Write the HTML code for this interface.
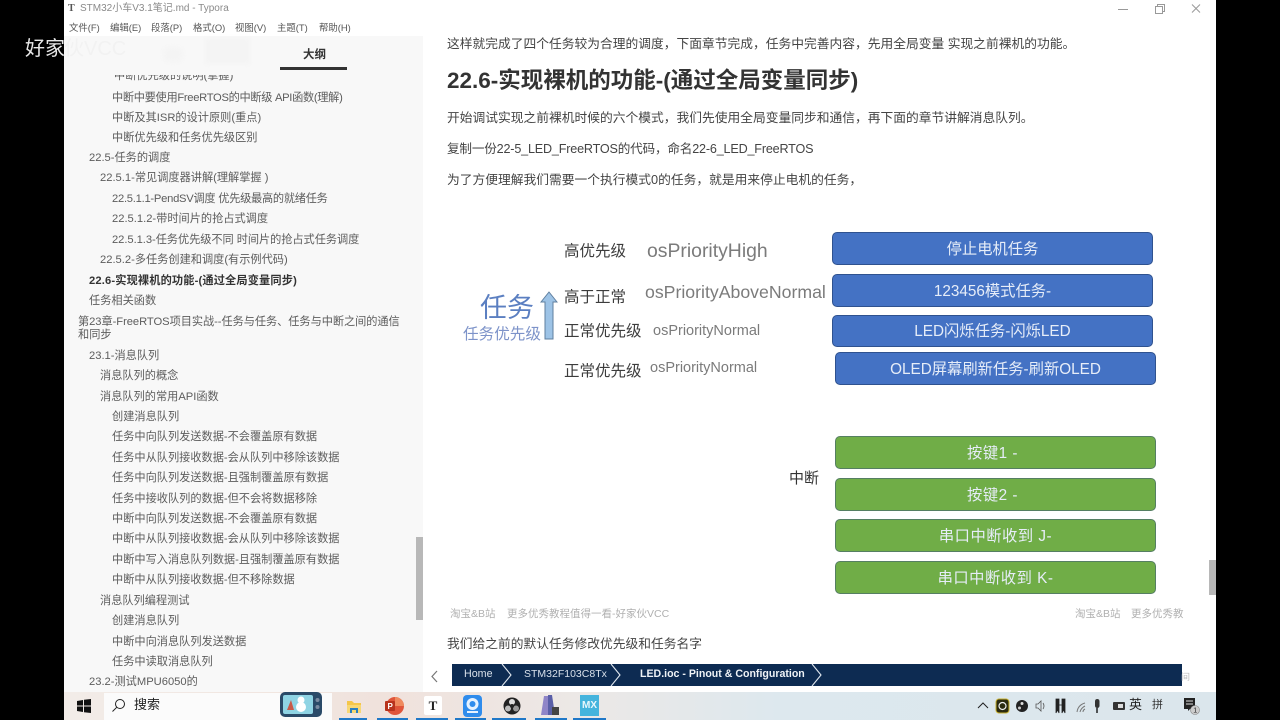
<!DOCTYPE html>
<html lang="zh">
<head>
<meta charset="utf-8">
<title>STM32小车V3.1笔记.md - Typora</title>
<style>
html,body{margin:0;padding:0;background:#000;}
body{width:1280px;height:720px;position:relative;overflow:hidden;font-family:"Liberation Sans","Noto Sans CJK SC",sans-serif;color:#444;}
div,span,svg{position:absolute;}
.t{white-space:nowrap;line-height:20px;height:20px;}
.m{font-size:9.4px;top:18px;color:#555;}
.o{font-size:11.2px;color:#5c5c5c;}
.b{font-size:12.75px;color:#444;}
.c{font-size:10.5px;color:#b0b0b0;}
.box{box-sizing:border-box;border-radius:5px;color:#e6edf8;font-size:15.3px;text-align:center;white-space:nowrap;}
.blue{background:#4472c4;border:1.5px solid #2f528f;}
.green{background:#70ad47;border:1.5px solid #557f62;letter-spacing:.5px;}
.lab{font-size:15.5px;color:#3c3c3c;white-space:nowrap;line-height:20px;}
.os{color:#7b7b7b;white-space:nowrap;line-height:20px;}
.bc{font-size:10.7px;line-height:14px;top:667px;color:#d8e0ea;white-space:nowrap;}
.ul{top:718px;height:2px;background:#1f78c8;}
</style>
</head>
<body>
<!-- window -->
<div style="left:64px;top:0;width:1152px;height:692px;background:#fff;"></div>
<div style="left:64px;top:36px;width:359px;height:656px;background:#f8f8f8;"></div>

<!-- title bar -->
<div class="t" style="left:68px;top:-1px;font:bold 10px/20px 'Liberation Serif',serif;color:#555;">T</div>
<div class="t" style="left:80px;top:-1px;font-size:10px;color:#8a8a8a;">STM32小车V3.1笔记.md - Typora</div>
<div class="t m" style="left:69px;">文件(F)</div>
<div class="t m" style="left:110px;">编辑(E)</div>
<div class="t m" style="left:151px;">段落(P)</div>
<div class="t m" style="left:193px;">格式(O)</div>
<div class="t m" style="left:235px;">视图(V)</div>
<div class="t m" style="left:277px;">主题(T)</div>
<div class="t m" style="left:319px;">帮助(H)</div>
<svg style="left:1115px;top:2px;" width="90" height="14" viewBox="0 0 90 14" fill="none" stroke="#999" stroke-width="1">
<path d="M3 7.500H13"/><path d="M40.500 4.500h7v7h-7zM42.500 4.500v-2h7v7h-2"/><path d="M77 2.500l8 8M85 2.500l-8 8"/>
</svg>

<!-- outline -->
<div style="left:64px;top:71px;width:352px;height:621px;overflow:hidden;">
<div class="t o" style="left:50px;top:-5px;">中断优先级的说明(掌握)</div>
<div class="t o" style="left:48px;top:17px;letter-spacing:-.3px;">中断中要使用FreeRTOS的中断级 API函数(理解)</div>
<div class="t o" style="left:48px;top:37px;">中断及其ISR的设计原则(重点)</div>
<div class="t o" style="left:48px;top:57px;">中断优先级和任务优先级区别</div>
<div class="t o" style="left:25px;top:77px;">22.5-任务的调度</div>
<div class="t o" style="left:36px;top:97px;">22.5.1-常见调度器讲解(理解掌握 )</div>
<div class="t o" style="left:48px;top:118px;letter-spacing:-.25px;">22.5.1.1-PendSV调度 优先级最高的就绪任务</div>
<div class="t o" style="left:48px;top:138px;">22.5.1.2-带时间片的抢占式调度</div>
<div class="t o" style="left:48px;top:159px;letter-spacing:-.05px;">22.5.1.3-任务优先级不同 时间片的抢占式任务调度</div>
<div class="t o" style="left:36px;top:179px;">22.5.2-多任务创建和调度(有示例代码)</div>
<div class="t o" style="left:25px;top:200px;font-weight:bold;color:#333;letter-spacing:.15px;">22.6-实现裸机的功能-(通过全局变量同步)</div>
<div class="t o" style="left:25px;top:220px;">任务相关函数</div>
<div class="t o" style="left:14px;top:241px;letter-spacing:-.05px;">第23章-FreeRTOS项目实战--任务与任务、任务与中断之间的通信</div>
<div class="t o" style="left:14px;top:254px;">和同步</div>
<div class="t o" style="left:25px;top:275px;">23.1-消息队列</div>
<div class="t o" style="left:36px;top:295px;">消息队列的概念</div>
<div class="t o" style="left:36px;top:316px;">消息队列的常用API函数</div>
<div class="t o" style="left:48px;top:336px;">创建消息队列</div>
<div class="t o" style="left:48px;top:356px;">任务中向队列发送数据-不会覆盖原有数据</div>
<div class="t o" style="left:48px;top:377px;">任务中从队列接收数据-会从队列中移除该数据</div>
<div class="t o" style="left:48px;top:397px;">任务中向队列发送数据-且强制覆盖原有数据</div>
<div class="t o" style="left:48px;top:418px;">任务中接收队列的数据-但不会将数据移除</div>
<div class="t o" style="left:48px;top:438px;">中断中向队列发送数据-不会覆盖原有数据</div>
<div class="t o" style="left:48px;top:458px;">中断中从队列接收数据-会从队列中移除该数据</div>
<div class="t o" style="left:48px;top:479px;">中断中写入消息队列数据-且强制覆盖原有数据</div>
<div class="t o" style="left:48px;top:499px;">中断中从队列接收数据-但不移除数据</div>
<div class="t o" style="left:36px;top:520px;">消息队列编程测试</div>
<div class="t o" style="left:48px;top:540px;">创建消息队列</div>
<div class="t o" style="left:48px;top:561px;">中断中向消息队列发送数据</div>
<div class="t o" style="left:48px;top:581px;">任务中读取消息队列</div>
<div class="t o" style="left:25px;top:601px;">23.2-测试MPU6050的</div>
</div>
<div style="left:64px;top:36px;width:352px;height:39px;background:#f8f8f8;"></div>
<div style="left:416px;top:537px;width:7px;height:83px;background:#b8b8b8;"></div>

<!-- watermark -->
<div class="t" style="left:25px;top:39px;font-size:20px;color:#e8e8e8;">好家</div>
<div class="t" style="left:64px;top:39px;font-size:20px;color:#f2f2f2;">伙VCC</div>
<div style="left:163px;top:47px;width:20px;height:15px;background:#f4f4f4;border-radius:7px;filter:blur(2px);"></div>
<div style="left:205px;top:38px;width:45px;height:26px;background:#f4f4f4;filter:blur(2px);"></div>

<!-- outline header -->
<div class="t" style="left:303px;top:45px;font-size:11.5px;font-weight:bold;color:#333;">大纲</div>
<div style="left:280px;top:67px;width:67px;height:3px;background:#333;"></div>

<!-- document -->
<div class="t b" style="left:447px;top:34px;">这样就完成了四个任务较为合理的调度，下面章节完成，任务中完善内容，先用全局变量 实现之前裸机的功能。</div>
<div class="t" style="left:447px;top:68px;height:26px;line-height:26px;font-size:22.500px;font-weight:bold;color:#333;">22.6-实现裸机的功能-(通过全局变量同步)</div>
<div class="t b" style="left:447px;top:108px;">开始调试实现之前裸机时候的六个模式，我们先使用全局变量同步和通信，再下面的章节讲解消息队列。</div>
<div class="t b" style="left:447px;top:139px;font-size:12.6px;letter-spacing:-.18px;">复制一份22-5_LED_FreeRTOS的代码，命名22-6_LED_FreeRTOS</div>
<div class="t b" style="left:447px;top:170px;">为了方便理解我们需要一个执行模式0的任务，就是用来停止电机的任务，</div>

<!-- diagram left -->
<div class="lab" style="left:564px;top:242px;">高优先级</div>
<div class="lab" style="left:564px;top:288px;">高于正常</div>
<div class="lab" style="left:564px;top:322px;">正常优先级</div>
<div class="lab" style="left:564px;top:362px;">正常优先级</div>
<div class="os" style="left:647px;top:241px;font-size:19.400px;">osPriorityHigh</div>
<div class="os" style="left:645px;top:282px;font-size:17.700px;">osPriorityAboveNormal</div>
<div class="os" style="left:653px;top:321px;font-size:14.500px;">osPriorityNormal</div>
<div class="os" style="left:650px;top:358px;font-size:14.500px;">osPriorityNormal</div>
<div class="t" style="left:480px;top:293px;height:30px;line-height:30px;font-size:27px;color:#5b7fc1;">任务</div>
<div class="t" style="left:463px;top:325px;font-size:15.600px;color:#7d93c9;">任务优先级</div>
<svg style="left:540px;top:291px;" width="18" height="49" viewBox="0 0 18 49">
<path d="M9 1L17 11H13V48H5V11H1Z" fill="#9dc3e6" stroke="#5f7f9f" stroke-width="1"/>
</svg>
<div class="t" style="left:789px;top:469px;font-size:15px;color:#333;">中断</div>

<!-- blue boxes -->
<div class="box blue" style="left:832px;top:232px;width:321px;height:33px;line-height:33px;">停止电机任务</div>
<div class="box blue" style="left:832px;top:274px;width:321px;height:33px;line-height:33px;">123456模式任务-</div>
<div class="box blue" style="left:832px;top:315px;width:321px;height:32px;line-height:32px;">LED闪烁任务-闪烁LED</div>
<div class="box blue" style="left:835px;top:352px;width:321px;height:33px;line-height:33px;">OLED屏幕刷新任务-刷新OLED</div>

<!-- green boxes -->
<div class="box green" style="left:835px;top:436px;width:321px;height:33px;line-height:33px;padding-right:6px;">按键1 -</div>
<div class="box green" style="left:835px;top:478px;width:321px;height:33px;line-height:33px;padding-right:6px;">按键2 -</div>
<div class="box green" style="left:835px;top:519px;width:321px;height:33px;line-height:33px;">串口中断收到 J-</div>
<div class="box green" style="left:835px;top:561px;width:321px;height:33px;line-height:33px;">串口中断收到 K-</div>

<!-- captions -->
<div class="t c" style="left:450px;top:604px;">淘宝&amp;B站</div>
<div class="t c" style="left:507px;top:604px;">更多优秀教程值得一看-好家伙VCC</div>
<div class="t c" style="left:1075px;top:604px;">淘宝&amp;B站</div>
<div class="t c" style="left:1131px;top:604px;">更多优秀教</div>
<div class="t b" style="left:447px;top:634px;">我们给之前的默认任务修改优先级和任务名字</div>

<!-- breadcrumb image -->
<svg style="left:430px;top:670px;" width="10" height="13" viewBox="0 0 10 13" fill="none" stroke="#777" stroke-width="1.200"><path d="M7 1L2 6.500L7 12"/></svg>
<div style="left:452px;top:664px;width:730px;height:22px;background:#0d2b52;"></div>
<div class="bc" style="left:464px;">Home</div>
<div class="bc" style="left:524px;font-size:10.5px;">STM32F103C8Tx</div>
<div class="bc" style="left:640px;font-weight:bold;color:#eef2f6;font-size:10.6px;">LED.ioc - Pinout &amp; Configuration</div>
<svg style="left:452px;top:664px;" width="380" height="22" viewBox="0 0 380 22" fill="none" stroke="#dfe6ee" stroke-width="1.100">
<path d="M50 0L59 11L50 22"/><path d="M159 0L168 11L159 22"/><path d="M360 0L369 11L360 22"/>
</svg>
<div class="t" style="left:1181px;top:667px;font-size:9px;color:#bbb;">间</div>
<div style="left:1209px;top:560px;width:7px;height:35px;background:#b8b8b8;"></div>

<!-- taskbar -->
<div style="left:64px;top:692px;width:1152px;height:28px;background:linear-gradient(90deg,#f2ece8 0%,#f0e2dc 28%,#ece8e6 45%,#dde8ee 62%,#dbe6ec 100%);"></div>
<svg style="left:77px;top:699px;" width="14" height="14" viewBox="0 0 14 14" fill="#111"><path d="M0 2L6 1V6.500H0ZM7 .8L14 0V6.500H7ZM0 7.500H6V13L0 12ZM7 7.500H14V14L7 13.200Z"/></svg>
<div style="left:104px;top:693px;width:228px;height:27px;background:#fbfbfb;"></div>
<svg style="left:111px;top:698px;" width="15" height="15" viewBox="0 0 15 15" fill="none" stroke="#222" stroke-width="1"><circle cx="9" cy="6" r="4.500"/><path d="M5.700 9.300L1.500 13.500"/></svg>
<div class="t" style="left:134px;top:695px;font-size:13px;color:#222;">搜索</div>
<!-- tv -->
<svg style="left:279px;top:690px;" width="44" height="30" viewBox="0 0 44 30">
<rect x="1" y="2" width="42" height="25" rx="5" fill="#2a4a68"/>
<rect x="4" y="5" width="30" height="19" rx="2" fill="#8fd4e4"/>
<circle cx="22" cy="17" r="5" fill="#fff"/><circle cx="22" cy="10" r="3.500" fill="#fff"/>
<path d="M8 20L12 10L15 20Z" fill="#c85a4a"/>
<circle cx="38.500" cy="10" r="2" fill="#7a8aa0"/><circle cx="38.500" cy="17" r="2" fill="#7a8aa0"/>
</svg>
<!-- folder -->
<svg style="left:346px;top:699px;" width="16" height="15" viewBox="0 0 16 15"><path d="M1 2h5l2 2h7v10H1z" fill="#f4c64a"/><path d="M1 6h14v8H1z" fill="#f7d774"/><path d="M4 14v-5h8v5h-2v-3H6v3z" fill="#2a7fc0"/></svg>
<!-- powerpoint -->
<svg style="left:384px;top:696px;" width="20" height="20" viewBox="0 0 20 20"><circle cx="11" cy="10" r="9" fill="#e0553a"/><path d="M11 1a9 9 0 0 1 9 9h-9z" fill="#ef8a5e"/><rect x="1" y="5" width="10" height="10" rx="1" fill="#b7331c"/><text x="3.500" y="13" font-size="8" font-weight="bold" fill="#fff" font-family="Liberation Sans">P</text></svg>
<!-- typora -->
<div style="left:424px;top:696px;width:18px;height:19px;background:#fff;border-radius:2px;text-align:center;font:bold 13px/19px 'Liberation Serif',serif;color:#222;">T</div>
<!-- webcam -->
<svg style="left:463px;top:695px;" width="19" height="22" viewBox="0 0 19 22"><rect x="0" y="0" width="19" height="22" rx="4" fill="#2f8cec"/><circle cx="9.500" cy="9" r="6" fill="#e6f2ff"/><circle cx="9.500" cy="9" r="3" fill="#2f8cec"/><rect x="4" y="16" width="11" height="2" fill="#e6f2ff"/></svg>
<!-- obs -->
<svg style="left:503px;top:697px;" width="18" height="18" viewBox="0 0 18 18"><circle cx="9" cy="9" r="8.500" fill="#222"/><circle cx="9" cy="5" r="3" fill="#ddd"/><circle cx="5" cy="11.500" r="3" fill="#bbb"/><circle cx="13" cy="11.500" r="3" fill="#999"/><circle cx="9" cy="9" r="2" fill="#222"/></svg>
<!-- books -->
<svg style="left:540px;top:694px;" width="20" height="23" viewBox="0 0 20 23"><path d="M1 21L4 2h5l2 19z" fill="#8f85c8"/><path d="M8 21V1h4l3 20z" fill="#5a5fa8"/><rect x="12" y="13" width="7" height="8" fill="#444"/></svg>
<!-- MX -->
<div style="left:580px;top:695px;width:19px;height:21px;background:#45b4dd;text-align:center;font:bold 10px/21px 'Liberation Sans',sans-serif;color:#eaf7fc;">MX</div>
<!-- underlines -->
<div class="ul" style="left:339px;width:28px;"></div>
<div class="ul" style="left:377px;width:31px;"></div>
<div class="ul" style="left:416px;width:32px;"></div>
<div class="ul" style="left:455px;width:31px;"></div>
<div class="ul" style="left:492px;width:34px;"></div>
<div class="ul" style="left:535px;width:32px;"></div>
<div class="ul" style="left:573px;width:33px;"></div>

<!-- tray -->
<svg style="left:977px;top:697px;" width="180" height="18" viewBox="0 0 180 18" fill="none" stroke="#222">
<path d="M1 11l5-5 5 5" stroke-width="1"/>
<rect x="19" y="2" width="13" height="14" rx="3" fill="#2a2a10" stroke="#c8b030"/><circle cx="25.500" cy="9" r="3.500" stroke="#eee" stroke-width="1.200"/>
<circle cx="45" cy="9" r="6" fill="#222" stroke="none"/><circle cx="45" cy="6.500" r="1.500" fill="#ddd" stroke="none"/><circle cx="42.500" cy="11" r="1.500" fill="#ccc" stroke="none"/>
<path d="M59 7v4h2l3 3V4l-3 3zM66 6q2 3 0 6" stroke-width=".8" stroke="#555"/>
<path d="M79 2h3v14l-1.500-3-1.500 3zM85 2h3v14l-1.500-3-1.500 3zM79 8h9" fill="#222" stroke="#222" stroke-width=".8"/>
<path d="M100 15q1-7 8-9M103 15q1-4 5-6M106 15q0-2 2-3" stroke="#777" stroke-width="1"/>
<rect x="118" y="2" width="4.500" height="9" rx="2.200" fill="#333" stroke="none"/><path d="M120 11v5" stroke-width="1.500"/>
<rect x="136" y="5" width="12" height="8" rx="1" fill="#333" stroke="none"/><rect x="141" y="7" width="5" height="4" fill="#ddd" stroke="none"/>
</svg>
<div class="t" style="left:1129px;top:695px;font-size:13px;color:#222;">英</div>
<div class="t" style="left:1152px;top:695px;font-size:11px;color:#333;">拼</div>
<svg style="left:1183px;top:697px;" width="18" height="19" viewBox="0 0 18 19"><path d="M1 1h11v11H7l-2 2v-2H1z" fill="#222"/><path d="M3 4h7M3 7h7" stroke="#ddd" stroke-width="1"/><circle cx="12" cy="13" r="4.500" fill="#ccc" stroke="#888" stroke-width=".6"/><text x="10.300" y="15.500" font-size="7" fill="#222" font-family="Liberation Sans">1</text></svg>
</body>
</html>
